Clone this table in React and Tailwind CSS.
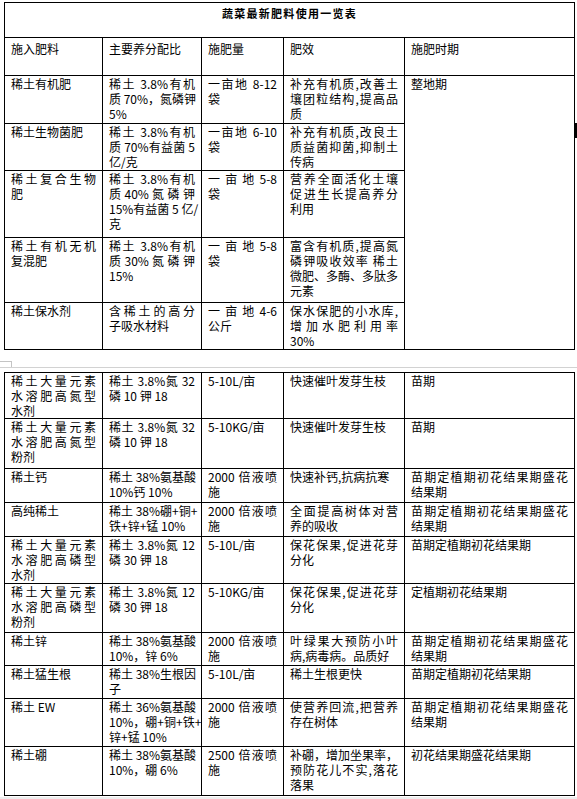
// App.jsx — 蔬菜最新肥料使用一览表

import React from 'react';

// 第一页的表格数据，每个单元格按行拆开
const TOP_ROWS = [
  {
    h: 'h-[48px]',
    cells: [['稀土有机肥'], ['稀土 3.8%有机', '质 70%，氮磷钾', '5%'], ['一亩地 8-12', '袋'], ['补充有机质,改善土', '壤团粒结构,提高品', '质']],
  },
  {
    h: 'h-[47px]',
    cells: [['稀土生物菌肥'], ['稀土 3.8%有机', '质 70%有益菌 5', '亿/克'], ['一亩地 6-10', '袋'], ['补充有机质,改良土', '质益菌抑菌,抑制土', '传病']],
  },
  {
    h: 'h-[67px]',
    cells: [['稀土复合生物', '肥'], ['稀土 3.8%有机', '质 40% 氮 磷 钾', '15%有益菌 5 亿/', '克'], ['一 亩 地 5-8', '袋'], ['营养全面活化土壤', '促进生长提高养分', '利用']],
  },
  {
    h: 'h-[65px]',
    cells: [['稀土有机无机', '复混肥'], ['稀土 3.8%有机', '质 30% 氮 磷 钾', '15%'], ['一 亩 地 5-8', '袋'], ['富含有机质,提高氮', '磷钾吸收效率 稀土', '微肥、多酶、多肽多', '元素']],
  },
  {
    h: 'h-[47px]',
    cells: [['稀土保水剂'], ['含稀土的高分', '子吸水材料'], ['一 亩 地 4-6', '公斤'], ['保水保肥的小水库,', '增加水肥利用率', '30%']],
  },
];

// 第二页的表格数据
const BOTTOM_ROWS = [
  {
    h: 'h-[46px]',
    cells: [['稀土大量元素', '水溶肥高氮型', '水剂'], ['稀土 3.8%氮 32', '磷 10 钾 18'], ['5-10L/亩'], ['快速催叶发芽生枝'], ['苗期']],
  },
  {
    h: 'h-[50px]',
    cells: [['稀土大量元素', '水溶肥高氮型', '粉剂'], ['稀土 3.8%氮 32', '磷 10 钾 18'], ['5-10KG/亩'], ['快速催叶发芽生枝'], ['苗期']],
  },
  {
    h: 'h-[34px]',
    cells: [['稀土钙'], ['稀土 38%氨基酸', '10%钙 10%'], ['2000 倍液喷', '施'], ['快速补钙,抗病抗寒'], ['苗期定植期初花结果期盛花', '结果期']],
  },
  {
    h: 'h-[34px]',
    cells: [['高纯稀土'], ['稀土 38%硼+铜+', '铁+锌+锰 10%'], ['2000 倍液喷', '施'], ['全面提高树体对营', '养的吸收'], ['苗期定植期初花结果期盛花', '结果期']],
  },
  {
    h: 'h-[47px]',
    cells: [['稀土大量元素', '水溶肥高磷型', '水剂'], ['稀土 3.8%氮 12', '磷 30 钾 18'], ['5-10L/亩'], ['保花保果,促进花芽', '分化'], ['苗期定植期初花结果期']],
  },
  {
    h: 'h-[49px]',
    cells: [['稀土大量元素', '水溶肥高磷型', '粉剂'], ['稀土 3.8%氮 12', '磷 30 钾 18'], ['5-10KG/亩'], ['保花保果,促进花芽', '分化'], ['定植期初花结果期']],
  },
  {
    h: 'h-[33px]',
    cells: [['稀土锌'], ['稀土 38%氨基酸', '10%，锌 6%'], ['2000 倍液喷', '施'], ['叶绿果大预防小叶', '病,病毒病。品质好'], ['苗期定植期初花结果期盛花', '结果期']],
  },
  {
    h: 'h-[33px]',
    cells: [['稀土猛生根'], ['稀土 38%生根因', '子'], ['5-10L/亩'], ['稀土生根更快'], ['苗期定植期初花结果期']],
  },
  {
    h: 'h-[48px]',
    cells: [['稀土 EW'], ['稀土 36%氨基酸', '10%，硼+铜+铁+', '锌+锰 10%'], ['2000 倍液喷', '施'], ['使营养回流,把营养', '存在树体'], ['苗期定植期初花结果期盛花', '结果期']],
  },
  {
    h: 'h-[49px]',
    cells: [['稀土硼'], ['稀土 38%氨基酸', '10%，硼 6%'], ['2500 倍液喷', '施'], ['补硼，增加坐果率，', '预防花儿不实,落花', '落果'], ['初花结果期盛花结果期']],
  },
];

// 两端对齐：除最后一行外，每行都撑满单元格
function Lines({ lines }) {
  return lines.map((line, i) => (
    <span
      key={i}
      className={
        i < lines.length - 1
          ? 'block whitespace-nowrap text-justify [text-align-last:justify]'
          : 'block whitespace-nowrap'
      }
    >
      {line}
    </span>
  ));
}

function Cell({ lines, rowSpan }) {
  return (
    <td rowSpan={rowSpan} className="border border-black align-top px-[6px] p-0">
      <Lines lines={lines} />
    </td>
  );
}

function Cols() {
  return (
    <colgroup>
      <col className="w-[98px]" />
      <col className="w-[99px]" />
      <col className="w-[82px]" />
      <col className="w-[121px]" />
      <col className="w-[170px]" />
    </colgroup>
  );
}

export default function App() {
  return (
    <div className="w-[577px] h-[799px] overflow-hidden bg-white text-black text-[12px] leading-[15px] font-['Noto_Sans_CJK_SC',sans-serif]">
      {/* 第一页 */}
      <div className="relative ml-[4px] mt-[2px] w-[570px]">
        <table className="w-[570px] table-fixed border-collapse">
          <Cols />
          <tbody>
            <tr className="h-[35px]">
              <td colSpan={5} className="border border-black align-top pt-[3px] text-center text-[11px] font-bold tracking-[1.3px]">
                蔬菜最新肥料使用一览表
              </td>
            </tr>
            <tr className="h-[38px]">
              {['施入肥料', '主要养分配比', '施肥量', '肥效', '施肥时期'].map((t) => (
                <td key={t} className="border border-black align-top px-[6px] pt-[3px]">
                  {t}
                </td>
              ))}
            </tr>
            {TOP_ROWS.map((row, i) => (
              <tr key={i} className={row.h}>
                {row.cells.map((c, j) => (
                  <Cell key={j} lines={c} />
                ))}
                {i === 0 && <Cell lines={['整地期']} rowSpan={5} />}
              </tr>
            ))}
          </tbody>
        </table>
        {/* 表格右侧的行尾标记 */}
        <div className="absolute left-[570px] top-[121px] w-[3px] h-[15px] bg-black" />
      </div>

      {/* 分页线 */}
      <div className="h-[22px] flex flex-col">
        <div className="h-[11px]" />
        <div className="w-[12px] h-[6px] border-t border-r border-[#c4c4c4]" />
        <div className="h-px bg-[#d2d2d2]" />
      </div>

      {/* 第二页 */}
      <table className="ml-[4px] w-[570px] table-fixed border-collapse">
        <Cols />
        <tbody>
          {BOTTOM_ROWS.map((row, i) => (
            <tr key={i} className={row.h}>
              {row.cells.map((c, j) => (
                <Cell key={j} lines={c} />
              ))}
            </tr>
          ))}
        </tbody>
      </table>
      <div className="mt-px h-[10px] bg-[#eeeeee]" />
    </div>
  );
}
